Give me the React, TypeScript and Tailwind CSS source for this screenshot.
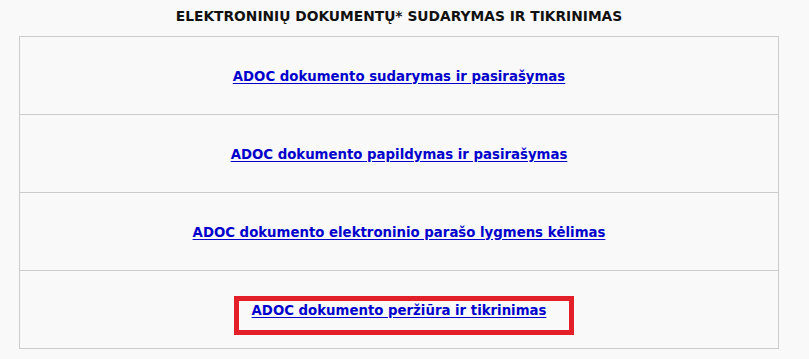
const LINKS = [
  "ADOC dokumento sudarymas ir pasirašymas",
  "ADOC dokumento papildymas ir pasirašymas",
  "ADOC dokumento elektroninio parašo lygmens kėlimas",
  "ADOC dokumento peržiūra ir tikrinimas",
];

export default function App() {
  return (
    <div className="min-h-[359px] w-[809px] bg-[#f9f9f9] font-['Verdana','DejaVu_Sans',sans-serif] text-[13.3px] font-bold">
      <h1 className="ml-[19px] h-[36px] w-[760px] pt-[8px] text-center text-[13.8px] font-bold leading-[16px] text-[#111]">
        ELEKTRONINIŲ DOKUMENTŲ* SUDARYMAS IR TIKRINIMAS
      </h1>
      <div className="ml-[19px] w-[760px] border border-[#cccccc] bg-[#f9f9f9]">
        {LINKS.map((text, i) => (
          <div
            key={text}
            className={
              i < LINKS.length - 1
                ? "relative flex h-[78px] items-center justify-center border-b border-[#cccccc] pt-[2px]"
                : "relative flex h-[77px] items-center justify-center pt-[2px]"
            }
          >
            <a href="#" className="text-[#0000cc] underline underline-offset-[2px]">
              {text}
            </a>
            {i === LINKS.length - 1 && (
              <span className="pointer-events-none absolute left-[214px] top-[25px] h-[39px] w-[340px] border-[5px] border-[#e3202a]" />
            )}
          </div>
        ))}
      </div>
    </div>
  );
}
